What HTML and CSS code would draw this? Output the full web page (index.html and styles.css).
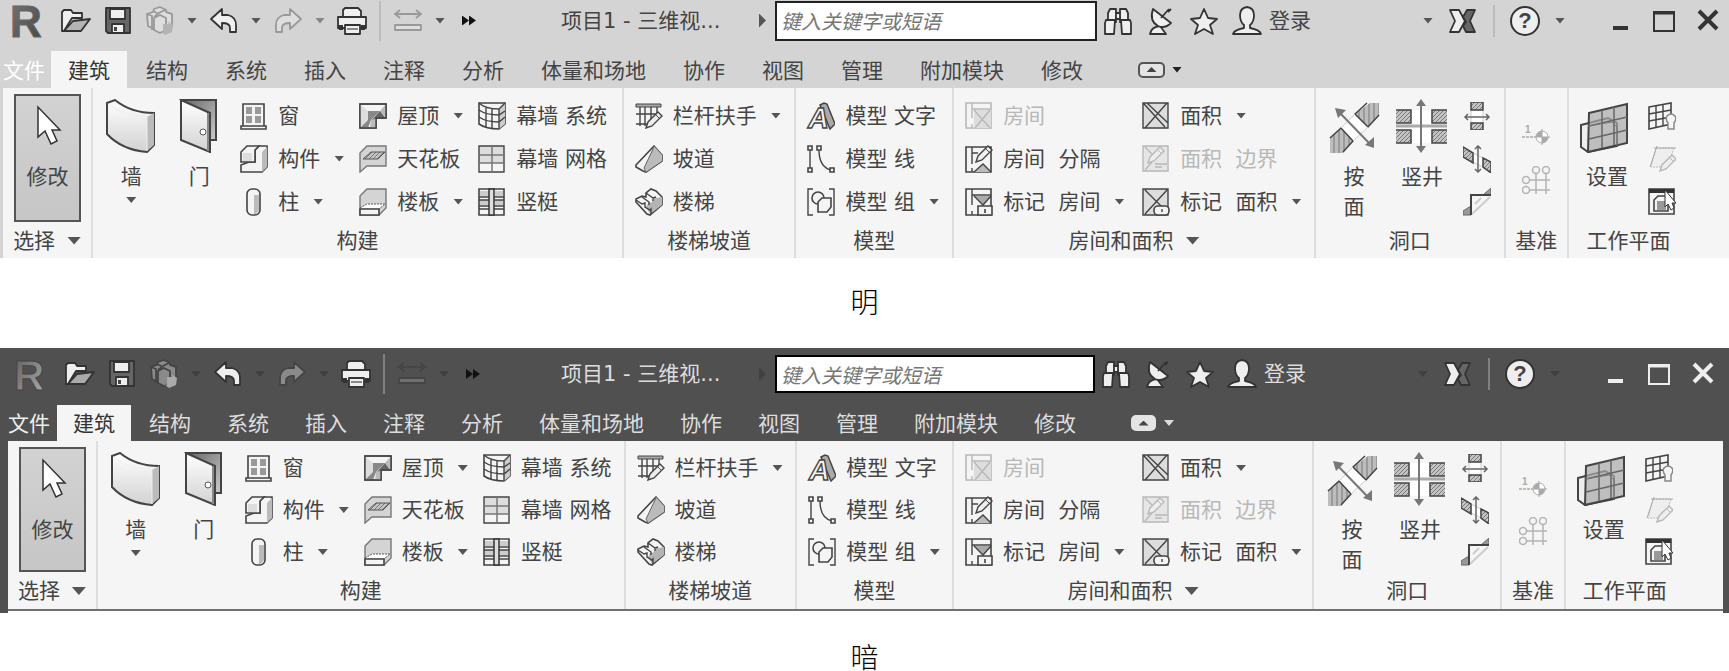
FILE: index.html
```html
<!DOCTYPE html>
<html lang="zh-CN">
<head>
	<meta charset="UTF-8">
	<meta name="viewport" content="width=device-width,initial-scale=1.0">
	<title>功能区主题</title>
	<link rel="stylesheet" href="styles.css">
</head>
<body>
	<!-- 图标 -->
	<svg class="sprite" width="0" height="0" aria-hidden="true">
		<defs>
			<linearGradient id="face" x1="0" y1="0" x2="0" y2="1"><stop offset="0" stop-color="#fff"/><stop offset="1" stop-color="#d2d2d2"/></linearGradient>
			<linearGradient id="shade" x1="0" y1="0" x2="1" y2="1"><stop offset="0" stop-color="#666"/><stop offset="1" stop-color="#ccc"/></linearGradient>
			<linearGradient id="logo" x1="0" y1="0" x2="1" y2="1"><stop offset="0" stop-color="#777"/><stop offset="1" stop-color="#444"/></linearGradient>
			<linearGradient id="logoDark" x1="0" y1="0" x2="1" y2="1"><stop offset="0" stop-color="#5a5a5a"/><stop offset="1" stop-color="#b0b0b0"/></linearGradient>
			<pattern id="hatch" width="4" height="4" patternUnits="userSpaceOnUse"><rect width="4" height="4" fill="#c4c4c4"/><path d="M0 4L4 0" stroke="#777"/></pattern>
			<pattern id="bars" width="5" height="5" patternUnits="userSpaceOnUse"><rect width="5" height="5" fill="#bdbdbd"/><path d="M2 0V5" stroke="#777"/></pattern>
		</defs>
		<!-- 标题栏 -->
		<symbol id="i-open" viewBox="0 0 30 30"><path class="t" d="M1 25V6l2-2h7l2 3h9v5h-10L3 25z"/><path class="t mid" d="M3 25l9-10 17-2-9 12z"/></symbol>
		<symbol id="i-save" viewBox="0 0 30 30"><path class="t deep" d="M3 2h24v25H5l-2-2z"/><path class="t" d="M7 3h15v10H7z"/><path class="t" d="M9 18h12v9H9z"/><path d="M11 21h3v4h-3z" fill="#444"/></symbol>
		<symbol id="i-cube" viewBox="0 0 30 30"><path class="t" d="M2 8l6-2 1-3 6-2 6 3v2l6 2v13l-6 2-6 3-6-3-6-3z"/><path class="tl" d="M2 8l5 2v14M8 5l6 3M20 4l-6 3-5 4M27 8l-6-2"/><path class="t" d="M9 12l6-3 6 3v12l-6 3-6-3z"/><path d="M18 18h6l-2-3 6 4-1 7-7 3-5-4 3 1z" fill="var(--t-mid)"/></symbol>
		<symbol id="i-undo" viewBox="0 0 30 30"><path class="t" d="M2 13L13 3v6h6q8 2 8 10v7h-6v-4q0-5-8-5v6z"/></symbol>
		<symbol id="i-redo" viewBox="0 0 30 30"><path class="t" d="M28 13L17 3v6h-6q-8 2-8 10v7h6v-4q0-5 8-5v6z"/></symbol>
		<symbol id="i-print" viewBox="0 0 30 30"><path class="t" d="M6 11V4l2-2h13l3 3v6z"/><path class="t" d="M1 11h28v11H1z"/><path d="M1 19h5v5H2zM24 19h5l-1 5h-4z" fill="#333"/><path class="t" d="M8 19h15v9H8z"/><path d="M10 22h11v2H10z" fill="#888"/></symbol>
		<symbol id="i-measure" viewBox="0 0 30 30"><path class="tl" d="M2 8h26M7 4L2 8l5 4M23 4l5 4-5 4"/><path class="t" d="M2 19h26v5H2z"/></symbol>
		<symbol id="i-find" viewBox="0 0 30 30"><path class="t" d="M7 3h6v4h4V3h6l2 4v9h-8v-5h-4v5H5V7z"/><path class="t" d="M3 14h9l-1 14H2V17zM18 14h9l1 3v11h-9zM13 7h4v6h-4z"/></symbol>
		<symbol id="i-dish" viewBox="0 0 30 30"><path class="t" d="M4 28q1-7 10-8l6 8z"/><path class="t" d="M7 3q-4 12 5 17 7 3 13-3z"/><path class="tl" d="M15 12l8-9M22 6l3-3"/></symbol>
		<symbol id="i-star" viewBox="0 0 30 30"><path class="t" d="M15 3l4 9 9 1-7 6 3 9-9-5-9 5 3-9-7-6 9-1z"/></symbol>
		<symbol id="i-user" viewBox="0 0 30 30"><path class="t" d="M1 28q1-4 11-6v-3Q8 16 8 9q0-7 7-8 7 1 7 8 0 7-4 10v3q10 2 11 6z"/></symbol>
		<symbol id="i-exchange" viewBox="0 0 30 30"><path class="t" d="M2 4h9l6 11-6 11H2l5-11z"/><path class="t deep" d="M27 4h-8l-4 7 3 5-3 4 3 6h9l-5-11z"/></symbol>
		<symbol id="i-min" viewBox="0 0 24 24"><path class="w" d="M5 19h15" stroke-width="4"/></symbol>
		<symbol id="i-max" viewBox="0 0 24 24"><path class="w" d="M2 3h20v19H2z" stroke-width="2"/><path class="w" d="M1 4h22" stroke-width="3"/></symbol>
		<symbol id="i-close" viewBox="0 0 24 24"><path class="w" d="M3 2l18 18M21 2L3 20" stroke-width="4"/></symbol>
		<!-- 大图标 -->
		<symbol id="b-cursor" viewBox="0 0 54 54"><path d="M17 8v30l7-6 6 13 6-3-5-11h8z" fill="#fff" stroke="#333" stroke-width="1.5"/></symbol>
		<symbol id="b-wall" viewBox="0 0 54 54"><path d="M3 4l8-3q16 13 39 13v32l-7 7Q18 51 3 35z" fill="url(#face)" stroke="#444" stroke-width="2"/><path d="M43 18l7-4v32l-7 6z" fill="#bbb"/><path d="M4 5q17 12 39 13v34" fill="none" stroke="#eee"/></symbol>
		<symbol id="b-door" viewBox="0 0 54 54"><path d="M9 1h35v40h-8z" fill="url(#shade)" stroke="#444" stroke-width="2"/><path d="M9 1l29 13v39L9 41z" fill="url(#face)" stroke="#444" stroke-width="2"/><path d="M36 14v38" stroke="#888" stroke-width="2"/><circle cx="31" cy="33" r="3" fill="#fff" stroke="#555"/></symbol>
		<symbol id="b-face" viewBox="0 0 54 54"><path d="M28 15l13 13-15 14-12-13z" fill="#fff"/><path d="M43 4h9v12L41 28 28 15zM14 29l12 13-10 12H3V39z" fill="url(#bars)"/><path d="M40 4L28 15l13 13 11-12M3 39l11-10 12 13-10 11" fill="none" stroke="#444" stroke-width="1.5"/><path d="M28 15L14 29M41 28L26 42" stroke="#ccc"/><path d="M13 14l29 30" stroke="#777" stroke-width="2"/><path d="M8 9l11 2-8 8zM47 49V38l-9 8z" fill="#777"/></symbol>
		<symbol id="b-shaft" viewBox="0 0 54 54"><path d="M16 11h21v33H16z" fill="#fff"/><path d="M1 11h15v13H1zM37 11h15v13H37zM1 31h15v13H1zM37 31h15v13H37z" fill="url(#hatch)"/><path d="M1 11h15v13H1M52 11H37v13h15M1 31h15v13H1M52 31H37v13h15" fill="none" stroke="#444" stroke-width="1.5"/><path d="M1 27h51" stroke="#aaa" stroke-width="3"/><path d="M26 5v46" stroke="#777" stroke-width="2"/><path d="M26 0l5 7H21zM26 54l5-7H21z" fill="#777"/></symbol>
		<symbol id="b-plane" viewBox="0 0 54 54"><path d="M1 26l27-7 9 5v23L8 53l-7-5z" fill="#eee" stroke="#444" stroke-width="2"/><path d="M9 14l38-9v39L8 53z" fill="#aaa" fill-opacity=".7" stroke="#444" stroke-width="2"/><path d="M22 11v38M34 8v38M9 27l38-9M9 40l38-9" fill="none" stroke="#666" stroke-width="1.5"/><path d="M8 27l24-4 5 5v19" fill="none" stroke="#777"/></symbol>
		<!-- 小图标 -->
		<symbol id="s-window" viewBox="0 0 28 28"><path class="s" d="M3 2h21v22H3zM1 24h25v3H1z"/><path d="M6 5h6v7H6zM15 5h6v7h-6zM6 14h6v7H6zM15 14h6v7h-6z" fill="#999"/></symbol>
		<symbol id="s-comp" viewBox="0 0 28 28"><path class="s" d="M1 20v7h21l5-5V1h-8l-4 4v12H9z"/><path d="M22 7l5-5v20l-5 5z" fill="#bbb"/><path class="s" d="M1 17V7l6-6h12l-4 4v12z"/><path d="M3 8h9v8H3z" fill="#ddd"/></symbol>
		<symbol id="s-column" viewBox="0 0 28 28"><rect class="s" x="7" y="1" width="13" height="26" rx="5"/><path d="M14 7h5v15l-3 4h-2z" fill="#bbb"/></symbol>
		<symbol id="s-roof" viewBox="0 0 28 28"><path class="s" d="M1 2h26v14H17v10H1z"/><path d="M1 2l8 7v9l-8 8z" fill="#ddd"/><path d="M27 2v14l-6-7z" fill="#bbb"/><path d="M9 9h12l-9 9-3 8H1l8-8z" fill="#888"/><path d="M21 9l6 7H17v10h-6l1-8z" fill="#bbb"/><path d="M21 9l5 7h-9l-4 2z" fill="#666"/><path class="l" d="M1 2h26v14H17v10H1z"/></symbol>
		<symbol id="s-ceil" viewBox="0 0 28 28"><path class="g" d="M1 8l7-7h19v20H8l-7 6z"/><path d="M4 14l8-7h14l-7 7z" fill="url(#hatch)" stroke="#555"/></symbol>
		<symbol id="s-floor" viewBox="0 0 28 28"><path class="g" d="M1 8l7-7h19v19l-7 7H1z"/><path d="M1 20l7-4h18l-6 5H1z" fill="#fff" stroke="#555" stroke-dasharray="2 1"/><path class="s" d="M1 21h19v6H1z"/></symbol>
		<symbol id="s-csys" viewBox="0 0 28 28"><path class="s" d="M1 1h26v21l-6 5Q8 27 1 22z"/><path d="M21 7l6-6v21l-6 5z" fill="#ccc"/><path class="l" d="M1 1q6 6 20 6l6-6M21 7v20M8 6v19M14 7v19M1 8q7 5 20 5l6-4M1 15q7 5 20 5l6-5"/></symbol>
		<symbol id="s-cgrid" viewBox="0 0 28 28"><path d="M1 1h25v17H1z" fill="#ddd"/><path class="l" d="M1 1h25v26H1z"/><path d="M14 1v26M1 10h25M1 18h25" stroke="#777" stroke-width="1.5"/></symbol>
		<symbol id="s-mull" viewBox="0 0 28 28"><path class="s" d="M1 1h25v26H1z"/><path d="M2 3h9v5H2zM17 3h8v5h-8zM2 12h9v5H2zM17 12h8v5h-8z" fill="#ccc"/><path class="l" d="M1 9h25M1 12h25M1 18h25M1 21h25"/><path d="M11 1h5v26h-5z" fill="#ddd" stroke="#333" stroke-width="1.5"/></symbol>
		<symbol id="pencil" viewBox="0 0 18 18"><path d="M1 17l2-6L13 1l4 4L7 15z" fill="#eee" stroke="var(--line)" stroke-width="1.4"/><path d="M11 4l4 4" stroke="var(--line)"/></symbol>
		<symbol id="s-rail" viewBox="0 0 28 28"><path d="M1 2h25v3H1z" fill="#aaa" stroke="#444"/><path class="l" d="M5 5v19M10 5v19M16 5v15M22 5v7M1 12h24M1 22h14"/><use href="#pencil" x="10" y="9" width="18" height="18"/></symbol>
		<symbol id="s-ramp" viewBox="0 0 28 28"><path class="s" d="M1 20L19 1l8 9v6L11 27l-3-1-7-4z"/><path d="M19 1l8 9v6l-16 11-2-4z" fill="#bbb"/><path d="M19 2L9 23l2 4" fill="none" stroke="#666"/></symbol>
		<symbol id="s-stair" viewBox="0 0 28 28"><path class="s" d="M1 14v-3l6-3 4 1V5l5-4 5 2 6 6v8L15 27l-3-1z"/><path d="M11 19l3-5 2 1 4-6 2 1 5-1v8L15 26z" fill="#b4b4b4"/><path class="l" d="M1 12l6 4 3-1v4l5 3 1-1v5M7 9l7 5v3M11 5l7 5 3-1M18 10v3" stroke-width="1.2"/></symbol>
		<symbol id="s-mtext" viewBox="0 0 28 28"><path d="M13 3l4-2 3 1 8 20-5 5z" fill="#aaa" stroke="#444" stroke-width="1.5"/></symbol>
		<symbol id="s-mline" viewBox="0 0 28 28"><path class="l" d="M3 5v18M12 5q0 17 12 20"/><path class="s" d="M1 1h4v4H1zM1 23h4v4H1zM10 1h4v4h-4zM23 23h4v4h-4z"/></symbol>
		<symbol id="s-mgroup" viewBox="0 0 28 28"><path class="l" d="M6 1H1v26h5M22 1h5v26h-5"/><path class="s" d="M11 16a6 6 0 1 1 6-6"/><path class="s" d="M11 14l4-4h9v9l-4 5h-9z"/></symbol>
		<symbol id="s-room" viewBox="0 0 28 28"><path class="s" d="M1 1h25v25H1z"/><path d="M9 8h17v18H9z" fill="#ddd"/><path class="l" d="M7 1v15M7 22v4M7 7h19M9 8l16 18M25 8L10 26" stroke-width="1.2"/></symbol>
		<symbol id="s-rsep" viewBox="0 0 28 28"><path class="s" d="M1 2h25v25H1z"/><path d="M9 27l9-8 8 8z" fill="#bbb"/><path class="l" d="M7 2v17M7 23v4M7 8h6M9 27l9-8 8 8"/><use href="#pencil" x="10" y="0" width="18" height="18"/></symbol>
		<symbol id="s-rtag" viewBox="0 0 28 28"><path class="s" d="M1 1h25v26H1z"/><path d="M9 8h17l-8 10z" fill="#aaa"/><path class="l" d="M7 1v16M7 23v4M7 7h19M9 8l9 9 8-9"/><path class="s" d="M13 18h14v9H13zM20 21v4" /></symbol>
		<symbol id="s-area" viewBox="0 0 28 28"><path d="M1 1h25v25H1z" fill="#ddd"/><path class="l" d="M1 1h25v25H1zM5 1l21 20M3 3l20 22M25 1L3 26M1 1l4 4"/></symbol>
		<symbol id="s-abound" viewBox="0 0 28 28"><path d="M1 1h25v25H1z" fill="#e6e6e6"/><path class="l" d="M1 1h25v25H1zM3 2l7 7M3 25l7-8M13 19h12M13 22h7"/><use href="#pencil" x="5" y="1" width="18" height="18"/></symbol>
		<symbol id="s-atag" viewBox="0 0 28 28"><path d="M1 1h25v26H1z" fill="#ddd"/><path class="l" d="M1 1h25v26H1zM3 2l19 19M25 2L3 26"/><rect class="s" x="12" y="18" width="15" height="9" rx="4"/><path class="l" d="M20 21v3"/></symbol>
		<symbol id="s-wopen" viewBox="0 0 28 28"><path d="M8 8h12v13H8z" fill="#fff" stroke="#ccc"/><path d="M8 0h12v8H8zM8 21h12v7H8z" fill="url(#hatch)" stroke="#444" stroke-width="1.5"/><path d="M2 15h24M5 12l-3 3 3 3M23 12l3 3-3 3" fill="none" stroke="#666" stroke-width="1.5"/></symbol>
		<symbol id="s-vopen" viewBox="0 0 28 28"><path d="M10 8l10 5v9l-10-5z" fill="#fff" stroke="#ccc"/><path d="M0 2l10 6v10L0 12zM20 13l8 4v11l-8-6z" fill="url(#hatch)" stroke="#444" stroke-width="1.5"/><path d="M15 1v26M12 4l3-3 3 3M12 24l3 3 3-3" fill="none" stroke="#666" stroke-width="1.5"/></symbol>
		<symbol id="s-dormer" viewBox="0 0 28 28"><path d="M20 7l8-7v7zM0 27v-4l8-5v9z" fill="#999" stroke="#666"/><path d="M9 26L27 9M12 16l6-6" stroke="#ccc" stroke-width="2"/><path d="M8 27V7h20" fill="none" stroke="#444" stroke-width="2"/></symbol>
		<symbol id="s-level" viewBox="0 0 28 28"><path d="M0 14h13" stroke="#aaa" stroke-width="1.5" stroke-dasharray="3 1"/><circle cx="20" cy="14" r="6" fill="#fff" stroke="#aaa"/><path d="M20 14V8a6 6 0 0 0-6 6zM20 14v6a6 6 0 0 0 6-6z" fill="#aaa"/><path d="M12 14h16M20 6v16" stroke="#aaa"/></symbol>
		<symbol id="s-axis" viewBox="0 0 28 28"><g fill="none" stroke="#b4b4b4" stroke-width="1.5"><circle cx="14" cy="4" r="3.5"/><circle cx="24" cy="4" r="3.5"/><circle cx="4" cy="14" r="3.5"/><circle cx="4" cy="24" r="3.5"/><path d="M14 8v20M24 8v20M8 14h20M8 24h20"/></g></symbol>
		<symbol id="s-show" viewBox="0 0 28 28"><path class="s" d="M1 5l22-4v21L1 27z"/><path class="l" d="M8 4v22M15 2v22M1 12l22-4M1 19l22-4"/><path d="M20 21q-3-4-1-7 4-4 8 0 2 3-1 7v6h-6z" fill="#f5f5f5" stroke="#888" stroke-width="1.5"/></symbol>
		<symbol id="s-ref" viewBox="0 0 28 28"><path d="M8 3h18l-6 19H3z" fill="#eee" stroke="#bbb" stroke-dasharray="2 1"/><path d="M6 3h22M2 22L9 1" stroke="#aaa"/><use href="#pencil" x="11" y="9" width="18" height="18"/></symbol>
		<symbol id="s-viewer" viewBox="0 0 28 28"><path class="s" d="M1 1h25v25H1z"/><path d="M1 1h25v4H1z" fill="#333"/><path class="s" d="M6 12l4-4h10v15H6z"/><path d="M9 13h9v9H9z" fill="#999"/><path d="M17 2v17l3-3 3 6 3-2-2-5h4z" fill="#fff" stroke="#333"/></symbol>
	</svg>

	<!-- 明亮主题 -->
	<figure class="sample light">
		<div class="app">
			<header class="titlebar">
				<div class="qat">
					<svg class="logo"><text x="0" y="34">R</text></svg>
					<button aria-label="打开"><svg class="ti"><use href="#i-open"/></svg></button>
					<button aria-label="保存"><svg class="ti"><use href="#i-save"/></svg></button>
					<button aria-label="同步" disabled><svg class="ti"><use href="#i-cube"/></svg></button>
					<button aria-label="同步选项"><i class="caret"></i></button>
					<button aria-label="放弃"><svg class="ti"><use href="#i-undo"/></svg></button>
					<button aria-label="放弃列表"><i class="caret"></i></button>
					<button aria-label="重做" disabled><svg class="ti"><use href="#i-redo"/></svg></button>
					<button aria-label="重做列表" disabled><i class="caret"></i></button>
					<button aria-label="打印"><svg class="ti"><use href="#i-print"/></svg></button>
					<span class="divider"></span>
					<button aria-label="测量" disabled><svg class="ti"><use href="#i-measure"/></svg></button>
					<button aria-label="测量选项"><i class="caret"></i></button>
					<button class="more" aria-label="更多"><i class="play"></i><i class="play"></i></button>
				</div>
				<div class="doc-title">项目1 - 三维视...</div>
				<button class="expand" aria-label="展开搜索"><i class="play tall"></i></button>
				<input class="search" type="text" placeholder="键入关键字或短语" aria-label="搜索">
				<div class="info">
					<button aria-label="查找"><svg class="ti"><use href="#i-find"/></svg></button>
					<button aria-label="通讯中心"><svg class="ti"><use href="#i-dish"/></svg></button>
					<button aria-label="收藏夹"><svg class="ti"><use href="#i-star"/></svg></button>
					<button class="login"><svg class="ti"><use href="#i-user"/></svg>登录</button>
				</div>
				<div class="services">
					<button aria-label="登录选项"><i class="caret"></i></button>
					<button aria-label="应用商店"><svg class="ti"><use href="#i-exchange"/></svg></button>
					<span class="divider"></span>
					<button class="help" aria-label="帮助">?</button>
					<button aria-label="帮助选项"><i class="caret"></i></button>
				</div>
				<div class="window-ctl">
					<button aria-label="最小化"><svg class="wi"><use href="#i-min"/></svg></button>
					<button aria-label="最大化"><svg class="wi"><use href="#i-max"/></svg></button>
					<button aria-label="关闭"><svg class="wi"><use href="#i-close"/></svg></button>
				</div>
			</header>
			<nav class="tabs">
				<button class="tab file">文件</button>
				<button class="tab active">建筑</button>
				<button class="tab">结构</button>
				<button class="tab">系统</button>
				<button class="tab">插入</button>
				<button class="tab">注释</button>
				<button class="tab">分析</button>
				<button class="tab">体量和场地</button>
				<button class="tab">协作</button>
				<button class="tab">视图</button>
				<button class="tab">管理</button>
				<button class="tab">附加模块</button>
				<button class="tab">修改</button>
				<button class="fold" aria-label="最小化功能区"><i class="up"></i></button>
				<button class="fold-menu" aria-label="功能区选项"><i class="caret"></i></button>
			</nav>
			<div class="ribbon">
				<section class="panel p-select">
					<div class="tools">
						<button class="big pressed"><svg><use href="#b-cursor"/></svg>修改</button>
					</div>
					<footer>选择<i class="caret wide"></i></footer>
				</section>
				<section class="panel p-build">
					<div class="tools">
						<button class="big"><svg><use href="#b-wall"/></svg>墙<i class="caret"></i></button>
						<button class="big"><svg><use href="#b-door"/></svg>门</button>
						<div class="col">
							<button class="tool"><svg><use href="#s-window"/></svg>窗</button>
							<button class="tool"><svg><use href="#s-comp"/></svg>构件<i class="caret"></i></button>
							<button class="tool"><svg><use href="#s-column"/></svg>柱<i class="caret"></i></button>
						</div>
						<div class="col">
							<button class="tool"><svg><use href="#s-roof"/></svg>屋顶<i class="caret"></i></button>
							<button class="tool"><svg><use href="#s-ceil"/></svg>天花板</button>
							<button class="tool"><svg><use href="#s-floor"/></svg>楼板<i class="caret"></i></button>
						</div>
						<div class="col">
							<button class="tool"><svg><use href="#s-csys"/></svg>幕墙 系统</button>
							<button class="tool"><svg><use href="#s-cgrid"/></svg>幕墙 网格</button>
							<button class="tool"><svg><use href="#s-mull"/></svg>竖梃</button>
						</div>
					</div>
					<footer>构建</footer>
				</section>
				<section class="panel p-stair">
					<div class="tools">
						<div class="col">
							<button class="tool"><svg><use href="#s-rail"/></svg>栏杆扶手<i class="caret"></i></button>
							<button class="tool"><svg><use href="#s-ramp"/></svg>坡道</button>
							<button class="tool"><svg><use href="#s-stair"/></svg>楼梯</button>
						</div>
					</div>
					<footer>楼梯坡道</footer>
				</section>
				<section class="panel p-model">
					<div class="tools">
						<div class="col">
							<button class="tool"><svg><use href="#s-mtext"/><text class="glyph" x="1" y="26">A</text></svg>模型 文字</button>
							<button class="tool"><svg><use href="#s-mline"/></svg>模型 线</button>
							<button class="tool"><svg><use href="#s-mgroup"/></svg>模型 组<i class="caret"></i></button>
						</div>
					</div>
					<footer>模型</footer>
				</section>
				<section class="panel p-room">
					<div class="tools">
						<div class="col">
							<button class="tool" disabled><svg><use href="#s-room"/></svg>房间</button>
							<button class="tool"><svg><use href="#s-rsep"/></svg>房间&nbsp; 分隔</button>
							<button class="tool"><svg><use href="#s-rtag"/></svg>标记&nbsp; 房间<i class="caret"></i></button>
						</div>
						<div class="col">
							<button class="tool"><svg><use href="#s-area"/></svg>面积<i class="caret"></i></button>
							<button class="tool" disabled><svg><use href="#s-abound"/></svg>面积&nbsp; 边界</button>
							<button class="tool"><svg><use href="#s-atag"/></svg>标记&nbsp; 面积<i class="caret"></i></button>
						</div>
					</div>
					<footer>房间和面积<i class="caret wide"></i></footer>
				</section>
				<section class="panel p-open">
					<div class="tools">
						<button class="big"><svg><use href="#b-face"/></svg>按<br>面</button>
						<button class="big"><svg><use href="#b-shaft"/></svg>竖井</button>
						<div class="col">
							<button class="tool" aria-label="墙洞口"><svg><use href="#s-wopen"/></svg></button>
							<button class="tool" aria-label="垂直洞口"><svg><use href="#s-vopen"/></svg></button>
							<button class="tool" aria-label="老虎窗"><svg><use href="#s-dormer"/></svg></button>
						</div>
					</div>
					<footer>洞口</footer>
				</section>
				<section class="panel p-datum">
					<div class="tools">
						<div class="col">
							<button class="tool" aria-label="标高" disabled><svg><use href="#s-level"/><text class="num" x="3" y="10">1</text></svg></button>
							<button class="tool" aria-label="轴网" disabled><svg><use href="#s-axis"/></svg></button>
						</div>
					</div>
					<footer>基准</footer>
				</section>
				<section class="panel p-plane">
					<div class="tools">
						<button class="big"><svg><use href="#b-plane"/></svg>设置</button>
						<div class="col">
							<button class="tool" aria-label="显示"><svg><use href="#s-show"/></svg></button>
							<button class="tool" aria-label="参照平面" disabled><svg><use href="#s-ref"/></svg></button>
							<button class="tool" aria-label="查看器"><svg><use href="#s-viewer"/></svg></button>
						</div>
					</div>
					<footer>工作平面</footer>
				</section>
			</div>
		</div>
		<figcaption>明</figcaption>
	</figure>

	<!-- 暗色主题 -->
	<figure class="sample dark">
		<div class="app">
			<header class="titlebar">
				<div class="qat">
					<svg class="logo"><text x="0" y="34">R</text></svg>
					<button aria-label="打开"><svg class="ti"><use href="#i-open"/></svg></button>
					<button aria-label="保存"><svg class="ti"><use href="#i-save"/></svg></button>
					<button aria-label="同步" disabled><svg class="ti"><use href="#i-cube"/></svg></button>
					<button aria-label="同步选项"><i class="caret"></i></button>
					<button aria-label="放弃"><svg class="ti"><use href="#i-undo"/></svg></button>
					<button aria-label="放弃列表"><i class="caret"></i></button>
					<button aria-label="重做" disabled><svg class="ti"><use href="#i-redo"/></svg></button>
					<button aria-label="重做列表" disabled><i class="caret"></i></button>
					<button aria-label="打印"><svg class="ti"><use href="#i-print"/></svg></button>
					<span class="divider"></span>
					<button class="faint" aria-label="测量" disabled><svg class="ti"><use href="#i-measure"/></svg></button>
					<button aria-label="测量选项"><i class="caret"></i></button>
					<button class="more" aria-label="更多"><i class="play"></i><i class="play"></i></button>
				</div>
				<div class="doc-title">项目1 - 三维视...</div>
				<button class="expand" aria-label="展开搜索"><i class="play tall"></i></button>
				<input class="search" type="text" placeholder="键入关键字或短语" aria-label="搜索">
				<div class="info">
					<button aria-label="查找"><svg class="ti"><use href="#i-find"/></svg></button>
					<button aria-label="通讯中心"><svg class="ti"><use href="#i-dish"/></svg></button>
					<button aria-label="收藏夹"><svg class="ti"><use href="#i-star"/></svg></button>
					<button class="login"><svg class="ti"><use href="#i-user"/></svg>登录</button>
				</div>
				<div class="services">
					<button aria-label="登录选项"><i class="caret"></i></button>
					<button aria-label="应用商店"><svg class="ti"><use href="#i-exchange"/></svg></button>
					<span class="divider"></span>
					<button class="help" aria-label="帮助">?</button>
					<button aria-label="帮助选项"><i class="caret"></i></button>
				</div>
				<div class="window-ctl">
					<button aria-label="最小化"><svg class="wi"><use href="#i-min"/></svg></button>
					<button aria-label="最大化"><svg class="wi"><use href="#i-max"/></svg></button>
					<button aria-label="关闭"><svg class="wi"><use href="#i-close"/></svg></button>
				</div>
			</header>
			<nav class="tabs">
				<button class="tab file">文件</button>
				<button class="tab active">建筑</button>
				<button class="tab">结构</button>
				<button class="tab">系统</button>
				<button class="tab">插入</button>
				<button class="tab">注释</button>
				<button class="tab">分析</button>
				<button class="tab">体量和场地</button>
				<button class="tab">协作</button>
				<button class="tab">视图</button>
				<button class="tab">管理</button>
				<button class="tab">附加模块</button>
				<button class="tab">修改</button>
				<button class="fold" aria-label="最小化功能区"><i class="up"></i></button>
				<button class="fold-menu" aria-label="功能区选项"><i class="caret"></i></button>
			</nav>
			<div class="ribbon">
				<section class="panel p-select">
					<div class="tools">
						<button class="big pressed"><svg><use href="#b-cursor"/></svg>修改</button>
					</div>
					<footer>选择<i class="caret wide"></i></footer>
				</section>
				<section class="panel p-build">
					<div class="tools">
						<button class="big"><svg><use href="#b-wall"/></svg>墙<i class="caret"></i></button>
						<button class="big"><svg><use href="#b-door"/></svg>门</button>
						<div class="col">
							<button class="tool"><svg><use href="#s-window"/></svg>窗</button>
							<button class="tool"><svg><use href="#s-comp"/></svg>构件<i class="caret"></i></button>
							<button class="tool"><svg><use href="#s-column"/></svg>柱<i class="caret"></i></button>
						</div>
						<div class="col">
							<button class="tool"><svg><use href="#s-roof"/></svg>屋顶<i class="caret"></i></button>
							<button class="tool"><svg><use href="#s-ceil"/></svg>天花板</button>
							<button class="tool"><svg><use href="#s-floor"/></svg>楼板<i class="caret"></i></button>
						</div>
						<div class="col">
							<button class="tool"><svg><use href="#s-csys"/></svg>幕墙 系统</button>
							<button class="tool"><svg><use href="#s-cgrid"/></svg>幕墙 网格</button>
							<button class="tool"><svg><use href="#s-mull"/></svg>竖梃</button>
						</div>
					</div>
					<footer>构建</footer>
				</section>
				<section class="panel p-stair">
					<div class="tools">
						<div class="col">
							<button class="tool"><svg><use href="#s-rail"/></svg>栏杆扶手<i class="caret"></i></button>
							<button class="tool"><svg><use href="#s-ramp"/></svg>坡道</button>
							<button class="tool"><svg><use href="#s-stair"/></svg>楼梯</button>
						</div>
					</div>
					<footer>楼梯坡道</footer>
				</section>
				<section class="panel p-model">
					<div class="tools">
						<div class="col">
							<button class="tool"><svg><use href="#s-mtext"/><text class="glyph" x="1" y="26">A</text></svg>模型 文字</button>
							<button class="tool"><svg><use href="#s-mline"/></svg>模型 线</button>
							<button class="tool"><svg><use href="#s-mgroup"/></svg>模型 组<i class="caret"></i></button>
						</div>
					</div>
					<footer>模型</footer>
				</section>
				<section class="panel p-room">
					<div class="tools">
						<div class="col">
							<button class="tool" disabled><svg><use href="#s-room"/></svg>房间</button>
							<button class="tool"><svg><use href="#s-rsep"/></svg>房间&nbsp; 分隔</button>
							<button class="tool"><svg><use href="#s-rtag"/></svg>标记&nbsp; 房间<i class="caret"></i></button>
						</div>
						<div class="col">
							<button class="tool"><svg><use href="#s-area"/></svg>面积<i class="caret"></i></button>
							<button class="tool" disabled><svg><use href="#s-abound"/></svg>面积&nbsp; 边界</button>
							<button class="tool"><svg><use href="#s-atag"/></svg>标记&nbsp; 面积<i class="caret"></i></button>
						</div>
					</div>
					<footer>房间和面积<i class="caret wide"></i></footer>
				</section>
				<section class="panel p-open">
					<div class="tools">
						<button class="big"><svg><use href="#b-face"/></svg>按<br>面</button>
						<button class="big"><svg><use href="#b-shaft"/></svg>竖井</button>
						<div class="col">
							<button class="tool" aria-label="墙洞口"><svg><use href="#s-wopen"/></svg></button>
							<button class="tool" aria-label="垂直洞口"><svg><use href="#s-vopen"/></svg></button>
							<button class="tool" aria-label="老虎窗"><svg><use href="#s-dormer"/></svg></button>
						</div>
					</div>
					<footer>洞口</footer>
				</section>
				<section class="panel p-datum">
					<div class="tools">
						<div class="col">
							<button class="tool" aria-label="标高" disabled><svg><use href="#s-level"/><text class="num" x="3" y="10">1</text></svg></button>
							<button class="tool" aria-label="轴网" disabled><svg><use href="#s-axis"/></svg></button>
						</div>
					</div>
					<footer>基准</footer>
				</section>
				<section class="panel p-plane">
					<div class="tools">
						<button class="big"><svg><use href="#b-plane"/></svg>设置</button>
						<div class="col">
							<button class="tool" aria-label="显示"><svg><use href="#s-show"/></svg></button>
							<button class="tool" aria-label="参照平面" disabled><svg><use href="#s-ref"/></svg></button>
							<button class="tool" aria-label="查看器"><svg><use href="#s-viewer"/></svg></button>
						</div>
					</div>
					<footer>工作平面</footer>
				</section>
			</div>
		</div>
		<figcaption>暗</figcaption>
	</figure>
</body>
</html>
```

FILE: styles.css
```css
*{
	margin: 0;
	padding: 0;
	box-sizing: border-box;
}
body{
	background: #fff;
	font: normal 21px/30px "DejaVu Sans", "Noto Sans CJK SC", sans-serif;
	color: #444;
}
button{
	display: flex;
	align-items: center;
	border: 0;
	background: none;
	font: inherit;
	color: inherit;
	white-space: nowrap;
}
svg{
	display: block;
	flex: none;
	overflow: visible;
}
.sprite{
	height: 0;
}

/*两套主题的颜色*/
.light{
	--bar: #d4d4d4;
	--text: #444;
	--file: #fff;
	--line: #444;
	--t-line: #333;
	--t-fill: #efefef;
	--t-mid: #b4b4b4;
	--t-deep: #666;
	--t-off-line: #999;
	--t-off-fill: #dedede;
	--caret: #555;
	--divider: #bbb;
	--win: #333;
	--tab-left: 19px;
	--tab-active: 17px;
	--row: 43px;
	--foot: 35px;
	--info-gap: 13px;
}
.dark{
	--bar: #505050;
	--text: #ddd;
	--file: #eee;
	--line: #444;
	--t-line: #333;
	--t-fill: #eee;
	--t-mid: #aaa;
	--t-deep: #666;
	--t-off-line: #444;
	--t-off-fill: #8a8a8a;
	--caret: #404040;
	--divider: #808080;
	--win: #eee;
	--tab-left: 18px;
	--tab-active: 16px;
	--row: 42px;
	--foot: 36px;
	--info-gap: 12px;
}

.app{
	background: var(--bar);
	color: var(--text);
}
.sample figcaption{
	padding: 32px 0 30px;
	font: 300 28px/28px "Liberation Serif", "Noto Sans CJK SC", serif;
	color: #000;
	text-align: center;
}
.dark figcaption{
	padding-bottom: 0;
}

/*标题栏*/
.titlebar{
	display: flex;
	align-items: center;
	height: 51px;
	padding: 0 9px 10px 10px;
}
.dark .titlebar{
	height: 57px;
	padding: 6px 14px 11px 14px;
}
.qat{
	display: flex;
	align-items: center;
	gap: 12px;
}
.logo{
	width: 30px;
	height: 36px;
	margin-right: 9px;
}
.logo text{
	font: bold 44px "Liberation Sans", sans-serif;
	fill: url(#logo);
	stroke: #666;
	stroke-width: 1px;
}
.dark .logo text{
	font-size: 42px;
	fill: url(#logoDark);
	stroke: #444;
}
.ti{
	width: 30px;
	height: 30px;
}
.wi{
	width: 24px;
	height: 24px;
}
.t{
	fill: var(--t-fill);
	stroke: var(--t-line);
	stroke-width: 1.8px;
	stroke-linejoin: round;
}
.tl{
	fill: none;
	stroke: var(--t-line);
	stroke-width: 1.8px;
}
.mid{
	fill: var(--t-mid);
}
.deep{
	fill: var(--t-deep);
}
.w{
	fill: none;
	stroke: var(--win);
}
.help{
	justify-content: center;
	width: 30px;
	height: 30px;
	border: 2px solid #333;
	border-radius: 50%;
	background: var(--t-fill);
	font: bold 22px/26px "Liberation Sans", sans-serif;
	color: #444;
}
.titlebar button:disabled{
	--t-line: var(--t-off-line);
	--t-fill: var(--t-off-fill);
}
.light .titlebar button:disabled{
	--caret: #888;
}
.dark .titlebar .faint:disabled{
	--t-line: #454545;
	--t-fill: #707070;
}
.divider{
	width: 2px;
	height: 40px;
	background: var(--divider);
}
.services .divider{
	height: 32px;
}
.more{
	justify-content: center;
	width: 24px;
}
.doc-title{
	flex: none;
	width: 198px;
	margin-left: 80px;
	font-size: 21px;
	white-space: nowrap;
}
.dark .doc-title{
	margin-left: 76px;
}
.expand{
	margin-right: 9px;
}
.search{
	flex: 0 1 322px;
	min-width: 80px;
	height: 40px;
	padding: 0 4px;
	border: 2px solid #222;
	background: #fff;
	font: italic 20px "Noto Sans CJK SC", sans-serif;
	color: #333;
}
.dark .search{
	flex-basis: 320px;
	height: 38px;
	border-color: #000;
}
.search::placeholder{
	color: #777;
	opacity: 1;
}
.info{
	display: flex;
	align-items: center;
	gap: var(--info-gap);
	margin-left: 6px;
}
.login{
	gap: 7px;
}
.services{
	display: flex;
	align-items: center;
	gap: 15px;
	margin-left: auto;
}
.window-ctl{
	display: flex;
	gap: 20px;
	margin-left: 43px;
}

/*三角箭头*/
.caret{
	flex: none;
	width: 10px;
	height: 6px;
	background: var(--caret);
	clip-path: polygon(0 0, 100% 0, 50% 100%);
}
.wide{
	width: 14px;
	height: 8px;
}
.play{
	width: 7px;
	height: 10px;
	background: #111;
	clip-path: polygon(0 0, 100% 50%, 0 100%);
}
.tall{
	height: 14px;
	background: var(--caret);
}

/*选项卡*/
.tabs{
	display: flex;
	align-items: center;
	height: 37px;
}
.dark .tabs{
	height: 36px;
}
.tab{
	height: 100%;
	padding: 2px 18px 0 var(--tab-left);
}
.file{
	padding: 2px 6px 0 3px;
	color: var(--file);
}
.dark .file{
	padding: 2px 7px 0 8px;
}
.active{
	padding: 2px var(--tab-active) 0;
	background: #f5f5f5;
	color: #333;
}
.fold{
	justify-content: center;
	width: 27px;
	height: 16px;
	margin-left: 37px;
	border: 2px solid #555;
	border-radius: 5px;
	background: #e4e4e4;
}
.dark .fold{
	width: 25px;
	border-color: #e4e4e4;
}
.up{
	width: 10px;
	height: 5px;
	background: #444;
	clip-path: polygon(50% 0, 100% 100%, 0 100%);
}
.fold-menu{
	--caret: #222;
	margin-left: 7px;
}
.dark .fold-menu{
	--caret: #ddd;
	margin-left: 8px;
}

/*功能区面板*/
.ribbon{
	--caret: #555;
	display: flex;
	margin-left: 3px;
	padding-right: 41px;
	background: #f5f5f5;
	color: #444;
}
.dark .ribbon{
	margin: 0 6px 0 8px;
	padding-right: 39px;
	border-bottom: 2px solid #707070;
}
.dark .app{
	padding-bottom: 2px;
	background: linear-gradient(#fff, #fff) 8px 100% / calc(100% - 14px) 2px no-repeat var(--bar);
}
.panel{
	min-width: 0;
	padding-top: 6px;
	border-right: 2px solid #dedede;
}
.panel footer{
	display: flex;
	align-items: center;
	justify-content: center;
	gap: 12px;
	height: var(--foot);
}
.p-select{ flex: 89 1 0; }
.p-build{ flex: 533 1 0; }
.p-stair{ flex: 172 1 0; }
.p-model{ flex: 157 1 0; }
.p-room{ flex: 363 1 0; }
.p-open{ flex: 189 1 0; }
.p-datum{ flex: 62 1 0; }
.p-plane{
	flex: 120 1 0;
	border-right: 0;
}
.tools{
	display: flex;
	gap: 14px;
	height: calc(var(--row) * 3);
	padding-left: 11px;
}
.big{
	flex: none;
	flex-direction: column;
	width: 54px;
	padding-top: 5px;
}
.big svg{
	width: 54px;
	height: 54px;
	margin-bottom: 9px;
}
.big .caret{
	margin-top: 5px;
}
.pressed{
	width: 67px;
	height: calc(100% - 1px);
	padding-top: 3px;
	border: 2px solid #555;
	background: linear-gradient(#d2d2d2, #c6c6c6);
}
.col{
	flex: none;
	display: flex;
	flex-direction: column;
	justify-content: center;
}
.p-build .col{
	width: 105px;
}
.p-room .col{
	width: 163px;
}
.p-datum .tools{
	justify-content: center;
	padding-left: 0;
}
.tool{
	height: var(--row);
}
.tool svg{
	width: 28px;
	height: 28px;
	margin-right: 10px;
}
.p-datum .tool svg{
	margin-right: 0;
}
.tool .caret{
	margin-left: 14px;
}
.tool:disabled{
	--line: #b8b8b8;
	color: #b8b8b8;
}
.s{
	fill: #f4f4f4;
	stroke: var(--line);
	stroke-width: 1.6px;
}
.l{
	fill: none;
	stroke: var(--line);
	stroke-width: 1.4px;
}
.g{
	fill: #d4d4d4;
	stroke: #777;
	stroke-width: 1.4px;
}
.glyph{
	font: italic bold 29px "Liberation Sans", sans-serif;
	fill: #f4f4f4;
	stroke: #444;
	stroke-width: 1.4px;
}
.num{
	font: bold 10px "Liberation Sans", sans-serif;
	fill: #aaa;
}
```
